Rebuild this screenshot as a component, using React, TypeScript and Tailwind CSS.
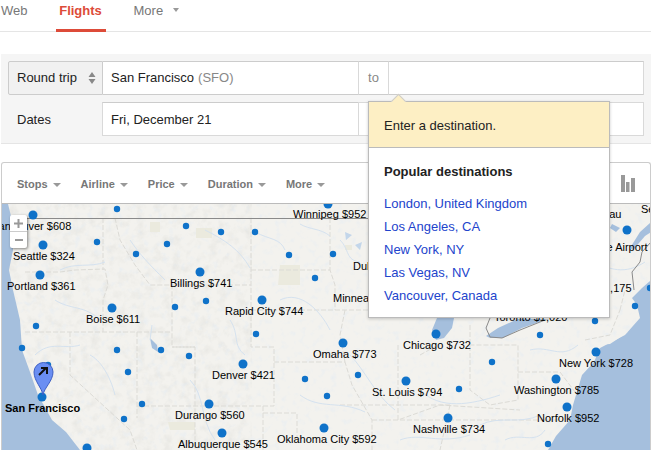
import React from 'react';

const BIG = [
  [33, 215], [43, 245], [40, 275], [112, 308], [200, 272], [262, 300], [243, 364], [42, 397], [209, 404],
  [222, 433], [324, 428], [87, 448], [328, 204], [627, 230], [436, 334], [343, 343], [406, 381], [448, 418],
  [596, 352], [556, 379], [567, 407],
];

const SMALL = [
  [117, 209], [186, 226], [221, 232], [255, 232], [97, 242], [167, 244], [136, 254], [289, 255], [315, 278],
  [206, 301], [175, 307], [36, 326], [256, 334], [22, 348], [117, 350], [161, 350], [189, 356], [305, 379],
  [128, 372], [48, 365], [142, 404], [327, 396], [124, 419], [333, 254], [492, 362], [358, 375], [459, 389],
  [540, 335], [595, 321], [635, 306], [548, 444], [650, 288],
];

const LABELS: [string, number, number][] = [
  ['Vancouver $608', -8, 226],
  ['Seattle $324', 13, 256],
  ['Portland $361', 7, 286],
  ['Boise $611', 86, 319],
  ['Billings $741', 170, 283],
  ['Rapid City $744', 225, 311],
  ['Denver $421', 212, 375],
  ['Durango $560', 175, 415],
  ['Albuquerque $545', 178, 444],
  ['Oklahoma City $592', 277, 439],
  ['Omaha $773', 313, 354],
  ['Winnipeg $952', 293, 214],
  ['Dul', 353, 266],
  ['Minnea', 333, 298],
  ['Chicago $732', 403, 345],
  ['St. Louis $794', 372, 392],
  ['Nashville $734', 413, 429],
  ['New York $728', 559, 363],
  ['Washington $785', 514, 390],
  ['Norfolk $952', 537, 418],
  ['Toronto $1,020', 494, 317],
  ['Montreal $1,175', 552, 288],
  ['Sept-Iles', 641, 209],
  ['Chibougamau', 553, 214],
  ['Bagotville Airport', 565, 247],
];

const BORDERS = [
  'M103 218V270M25 272L60 272L75 270L105 269L108 285L103 300V332',
  'M115 218L120 240L135 265L150 285H172V347H195V450',
  'M25 332H172M70 332V375L130 430L137 450M137 332V418',
  'M172 285H251M251 218V347H274V406H137M195 347H172',
  'M251 270H330L335 285L335 310M251 310H370M330 204V270',
  'M263 406V450M263 413H297V440M274 362H345L352 385L372 420L372 450',
  'M345 310L340 335L345 362M340 405H450M398 345V420L440 405L520 410',
  'M470 325V390L490 405L518 400V345H470M518 372L560 372L575 392M420 355L438 345',
  'M450 405L440 450M372 420H560M585 340L610 335L620 310M620 310L625 290',
];

const RIVERS = [
  'M255 232C270 240 280 238 285 250', 'M300 224C310 230 320 228 330 236', 'M130 240C140 255 150 265 165 280',
  'M60 270C75 262 90 268 105 262', 'M205 230C225 240 240 250 250 268', 'M280 300C300 290 320 310 330 330',
  'M350 355C365 370 375 395 395 410', 'M420 390C440 410 470 405 500 395', 'M190 380C205 395 200 420 215 440',
  'M90 355C100 360 110 375 115 395', 'M480 425C500 415 520 425 540 415', 'M590 260C610 270 625 275 645 262',
  'M530 350C550 345 560 360 578 345', 'M340 240C350 250 345 260 360 262', 'M35 355C50 340 65 350 80 345',
  'M300 395C320 410 340 400 365 412', 'M400 440C420 432 440 445 470 435', 'M505 440C520 432 535 445 545 430',
  'M150 340L152 325M230 320C240 335 232 345 245 355', 'M55 300C70 310 85 305 100 320',
];

const Caret = () => <span className="ml-[5px] h-0 w-0 border-x-4 border-t-4 border-x-transparent border-t-[#999]" />;

const FilterItem = ({ label }: { label: string }) => (
  <span className="mr-[20px] flex items-center text-[11px] font-bold text-[#777]">
    {label}
    <Caret />
  </span>
);

const MapArea = () => (
  <div className="relative h-[246px] overflow-hidden bg-[#f3f2ee]">
    <svg className="absolute left-0 top-0" width="649" height="246" viewBox="2 204 649 246" fill="none">
      <defs>
        <filter id="terrain" x="0" y="0" width="100%" height="100%">
          <feTurbulence type="fractalNoise" baseFrequency="0.11" numOctaves="3" seed="4" />
          <feColorMatrix values="0 0 0 0 0.55  0 0 0 0 0.55  0 0 0 0 0.52  1.6 0 0 0 -0.72" />
        </filter>
        <filter id="water" x="0" y="0" width="100%" height="100%">
          <feTurbulence type="fractalNoise" baseFrequency="0.16" numOctaves="2" seed="9" />
          <feColorMatrix values="0 0 0 0 0.7  0 0 0 0 0.8  0 0 0 0 0.92  2.2 0 0 0 -1.18" />
        </filter>
      </defs>
      <rect x="2" y="204" width="250" height="246" filter="url(#terrain)" opacity="0.3" />
      <rect x="2" y="204" width="649" height="246" filter="url(#water)" opacity="0.45" />
      <path d="M0 204H8L12 220L13 250L9 270L13 290L20 320L22 350L30 372L38 395L52 420L66 432L80 450H0Z" fill="#a5bfdd" />
      <path d="M651 450H548L556 436L570 420L573 405L582 375L594 362L600 348L625 335L640 318L637 305L632 298L642 288L651 280Z" fill="#a5bfdd" />
      <path d="M596 345L628 332L610 344Z" fill="#f3f2ee" />
      <path d="M437 318H454L452 328L444 338L436 340L432 330Z" fill="#a5bfdd" />
      <path d="M486 336L490 338L503 338L522 328L548 319H518L498 328Z" fill="#a5bfdd" />
      <path d="M651 222L640 232L630 248L633 250L645 236L651 232ZM612 224L620 228L616 232L610 228Z" fill="#a5bfdd" />
      <path d="M150 338L157 345L158 352L152 348Z" fill="#a5bfdd" />
      <path d="M345 232L352 235L346 240ZM355 245L362 242L360 250Z" fill="#c3d6ea" />
      <path d="M196 228H212V238H196ZM280 265H300V285H278ZM168 422H195V430H170ZM345 245H352V250H345ZM150 222H160V232H150Z" fill="#ebeade" />
      {BORDERS.map(d => <path key={d} d={d} stroke="#dcdbd6" strokeWidth="1" strokeDasharray="5 2" />)}
      {RIVERS.map(d => <path key={d} d={d} stroke="#d5e2ef" strokeWidth="1" />)}
      <path d="M10 218.5H380" stroke="#8a8a8a" />
      <path d="M490 318L486 328L490 337L502 338L520 330L545 320" stroke="#8a8a8a" />
      <path d="M651 242L642 252L640 262L632 272L634 290" stroke="#8a8a8a" />
      {BIG.map(([x, y]) => <circle key={`${x}-${y}`} cx={x} cy={y} r="4.5" fill="#0f72c9" />)}
      {SMALL.map(([x, y]) => <circle key={`${x}-${y}`} cx={x} cy={y} r="3.2" fill="#0f72c9" />)}
      <path d="M43 395C42 388 34 381 34 372A9.5 9.5 0 0 1 53 372C53 381 44 388 43 395Z" fill="#6a8ef2" stroke="#3d5fc4" />
      <path d="M39 375L46 368M41 368H47V374" stroke="#111" strokeWidth="2" />
    </svg>
    {LABELS.map(([text, x, y]) => (
      <span
        key={text}
        className="absolute whitespace-nowrap text-[11px] leading-[13px] text-black"
        style={{ left: x - 2, top: y - 204 - 6 }}
      >
        {text}
      </span>
    ))}
    <span className="absolute left-[3px] top-[198px] text-[11px] font-bold leading-[13px] text-black">San Francisco</span>
    <div className="absolute left-[8px] top-[11px] flex w-[17px] flex-col rounded-[2px] bg-white text-[#888] shadow-[1px_1px_3px_rgba(0,0,0,0.45)]">
      <span className="flex h-[17px] items-center justify-center border-b border-[#ccc]">
        <svg width="9" height="9" viewBox="0 0 9 9"><path d="M3.5 0h2v3.5H9v2H5.5V9h-2V5.5H0v-2h3.5z" fill="#999" /></svg>
      </span>
      <span className="flex h-[16px] items-center justify-center">
        <span className="h-[2px] w-[8px] bg-[#999]" />
      </span>
    </div>
  </div>
);

export default function App() {
  return (
    <div className="relative h-[450px] w-[651px] overflow-hidden bg-white font-['Liberation_Sans',Arial,sans-serif] text-[13px] text-[#222]">
      {/* Tabs */}
      <nav className="relative flex h-[32px] items-start border-b border-[#e5e5e5] leading-[22px]">
        <span className="ml-[1px] text-[#777]">Web</span>
        <span className="relative ml-[28px] h-[32px] w-[50px] border-b-[3px] border-[#dd4b39] text-center font-bold text-[#dd4b39]">Flights</span>
        <span className="ml-[28px] text-[#777]">More</span>
        <span className="ml-[10px] mt-[8px] h-0 w-0 border-x-[3.5px] border-t-4 border-x-transparent border-t-[#999]" />
      </nav>

      {/* Search form */}
      <section className="ml-[1px] mt-[22px] flex h-[90px] flex-col gap-[7px] border-b border-[#e5e5e5] bg-[#f5f5f5] py-[7px] pl-[7px] pr-[7px]">
        <div className="flex h-[34px]">
          <div className="flex w-[95px] items-center justify-between rounded-l-[2px] border border-[#ccc] bg-[#f1f1f1] pl-[8px] pr-[6px]">
            Round trip
            <svg width="8" height="12" viewBox="0 0 8 12"><path d="M4 0l3.5 5H.5zM4 12L.5 7h7z" fill="#888" /></svg>
          </div>
          <div className="flex w-[255px] items-center border-y border-[#ccc] bg-white pl-[8px]">
            San Francisco<span className="ml-[4px] text-[#888]">(SFO)</span>
          </div>
          <div className="flex w-[31px] items-center justify-center border border-[#d9d9d9] border-y-[#ccc] bg-white text-[#888]">to</div>
          <div className="flex-1 border-y border-r border-[#d9d9d9] border-y-[#ccc] bg-white" />
        </div>
        <div className="flex h-[34px]">
          <div className="flex w-[94px] items-center pl-[9px] pt-[1px]">Dates</div>
          <div className="flex w-[256px] items-center border border-r-0 border-[#d9d9d9] border-t-[#ccc] bg-white pl-[8px] pt-[1px]">Fri, December 21</div>
          <div className="w-[31px] border border-[#d9d9d9] bg-white" />
          <div className="flex-1 border-y border-r border-[#d9d9d9] bg-white" />
        </div>
      </section>

      {/* Map card */}
      <section className="ml-[1px] mt-[18px] rounded-t-[3px] border border-b-0 border-[#ccc]">
        <div className="flex h-[41px] items-center border-b border-[#bbb] pl-[15px] pr-[15px] pt-[3px]">
          <FilterItem label="Stops" />
          <FilterItem label="Airline" />
          <FilterItem label="Price" />
          <FilterItem label="Duration" />
          <FilterItem label="More" />
          <svg className="mb-[2px] ml-auto" width="14" height="17" viewBox="0 0 14 17">
            <path d="M0 0h4v17H0zM5 7h3.5v10H5zM10 3h4v14h-4z" fill="#999" />
          </svg>
        </div>
        <MapArea />
      </section>

      {/* Destination popup */}
      <div className="absolute left-[368px] top-[101px] w-[242px] border border-[#bbb] bg-white shadow-[0_1px_3px_rgba(0,0,0,0.2)]">
        <span className="absolute left-[24px] top-[-6px] h-[11px] w-[11px] rotate-45 border-l border-t border-[#ccc] bg-[#fdefc4]" />
        <div className="relative flex h-[46px] items-center border-b border-[#bbb] bg-[#fdefc4] pl-[15px] pt-[2px]">Enter a destination.</div>
        <div className="h-[169px] pl-[15px] pt-[16px]">
          <h3 className="text-[13px] font-bold leading-[16px]">Popular destinations</h3>
          <div className="mt-[15px] flex flex-col gap-[5px] leading-[18px] text-[#2244cc]">
            <a>London, United Kingdom</a>
            <a>Los Angeles, CA</a>
            <a>New York, NY</a>
            <a>Las Vegas, NV</a>
            <a>Vancouver, Canada</a>
          </div>
        </div>
      </div>
    </div>
  );
}
